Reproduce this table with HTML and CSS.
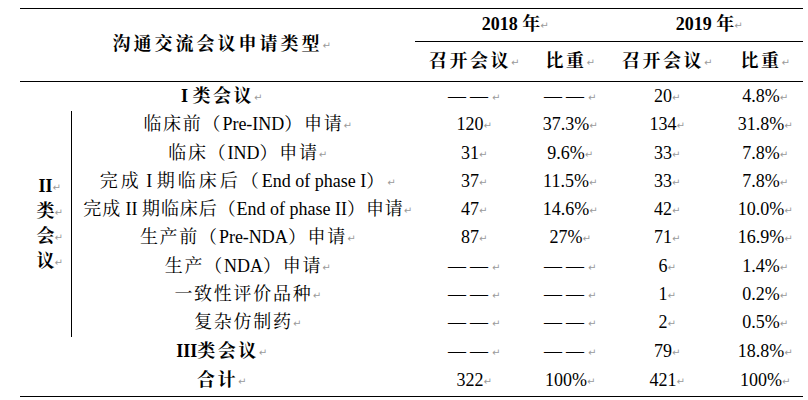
FILE: index.html
```html
<!DOCTYPE html>
<html lang="zh">
<head>
<meta charset="utf-8">
<title>沟通交流会议申请类型</title>
<link rel="stylesheet" href="styles.css">
</head>
<body>
<table class="t">
  <colgroup>
    <col class="c0"><col class="c1"><col class="c2"><col class="c3"><col class="c4"><col class="c5">
  </colgroup>
  <thead>
    <tr class="h1">
      <th class="title" colspan="2" rowspan="2">沟通交流会议申请类型</th>
      <th class="yr" colspan="2">2018 年</th>
      <th class="yr" colspan="2">2019 年</th>
    </tr>
    <tr class="h2">
      <th>召开会议</th><th>比重</th><th>召开会议</th><th>比重</th>
    </tr>
  </thead>
  <tbody>
    <tr class="r1">
      <td class="lab b" colspan="2"><span class="en">I </span>类会议</td>
      <td class="na">——</td><td class="na">——</td><td>20</td><td>4.8%</td>
    </tr>
    <tr class="r">
      <td class="grp" rowspan="8"><div>II</div><div>类</div><div>会</div><div>议</div></td>
      <td class="lab">临床前（<span class="en">Pre-IND</span>）申请</td>
      <td>120</td><td>37.3%</td><td>134</td><td>31.8%</td>
    </tr>
    <tr class="r">
      <td class="lab">临床（<span class="en">IND</span>）申请</td>
      <td>31</td><td>9.6%</td><td>33</td><td>7.8%</td>
    </tr>
    <tr class="r">
      <td class="lab wide">完成<span class="en"> I </span>期临床后（<span class="en">End of phase I</span>）</td>
      <td>37</td><td>11.5%</td><td>33</td><td>7.8%</td>
    </tr>
    <tr class="r">
      <td class="lab tight">完成<span class="en"> II </span>期临床后（<span class="en">End of phase II</span>）申请</td>
      <td>47</td><td>14.6%</td><td>42</td><td>10.0%</td>
    </tr>
    <tr class="r">
      <td class="lab">生产前（<span class="en">Pre-NDA</span>）申请</td>
      <td>87</td><td>27%</td><td>71</td><td>16.9%</td>
    </tr>
    <tr class="r">
      <td class="lab">生产（<span class="en">NDA</span>）申请</td>
      <td class="na">——</td><td class="na">——</td><td>6</td><td>1.4%</td>
    </tr>
    <tr class="r">
      <td class="lab">一致性评价品种</td>
      <td class="na">——</td><td class="na">——</td><td>1</td><td>0.2%</td>
    </tr>
    <tr class="r">
      <td class="lab">复杂仿制药</td>
      <td class="na">——</td><td class="na">——</td><td>2</td><td>0.5%</td>
    </tr>
    <tr class="r2">
      <td class="lab b" colspan="2"><span class="en">III</span>类会议</td>
      <td class="na">——</td><td class="na">——</td><td>79</td><td>18.8%</td>
    </tr>
    <tr class="r2">
      <td class="lab b" colspan="2">合计</td>
      <td>322</td><td>100%</td><td>421</td><td>100%</td>
    </tr>
  </tbody>
</table>
</body>
</html>
```

FILE: styles.css
```css
html, body {
  margin: 0;
  background: #fff;
}
body {
  font-family: "Liberation Serif", "Noto Serif CJK SC", "Noto Sans CJK SC", serif;
  font-size: 18px;
  color: #000;
}
.t {
  margin: 8px 0 0 20px;
  width: 783px;
  table-layout: fixed;
  border-collapse: separate;
  border-spacing: 0;
  border-top: 1px solid #000;
  border-bottom: 1px solid #000;
}
.c0 { width: 52px; }
.c1 { width: 343px; }
.c2 { width: 110px; }
.c3 { width: 82px; }
.c4 { width: 112px; }
.c5 { width: 84px; }

th, td {
  padding: 0;
  text-align: center;
  vertical-align: middle;
  white-space: nowrap;
  line-height: 1.2;
}
th { font-weight: bold; }

th::after, td::after, .grp div::after {
  content: "\21B5";
  display: inline-block;
  width: 0;
  font: 400 10px "DejaVu Sans", sans-serif;
  color: #9a9a9a;
  letter-spacing: 0;
  vertical-align: 1px;
}
.grp::after { content: none; }

.h1 { height: 33px; }
.h2 { height: 40px; }
.yr { border-bottom: 1px solid #000; }
.h2 th, .title { border-bottom: 1px solid #000; }
.title { letter-spacing: 3px; }
.h2 th { letter-spacing: 2.5px; }

.r1 { height: 29px; }
.r { height: 28.25px; }
.r2 { height: 29.5px; }

.lab { letter-spacing: 1.75px; }
.lab.wide { letter-spacing: 3px; }
.lab.tight { letter-spacing: 0.9px; }
.b { font-weight: bold; letter-spacing: 2.5px; }
.en { letter-spacing: 0; }
.na { letter-spacing: 4px; }

.grp {
  font-weight: bold;
  line-height: 25px;
  border-right: 1px solid #000;
}
```
